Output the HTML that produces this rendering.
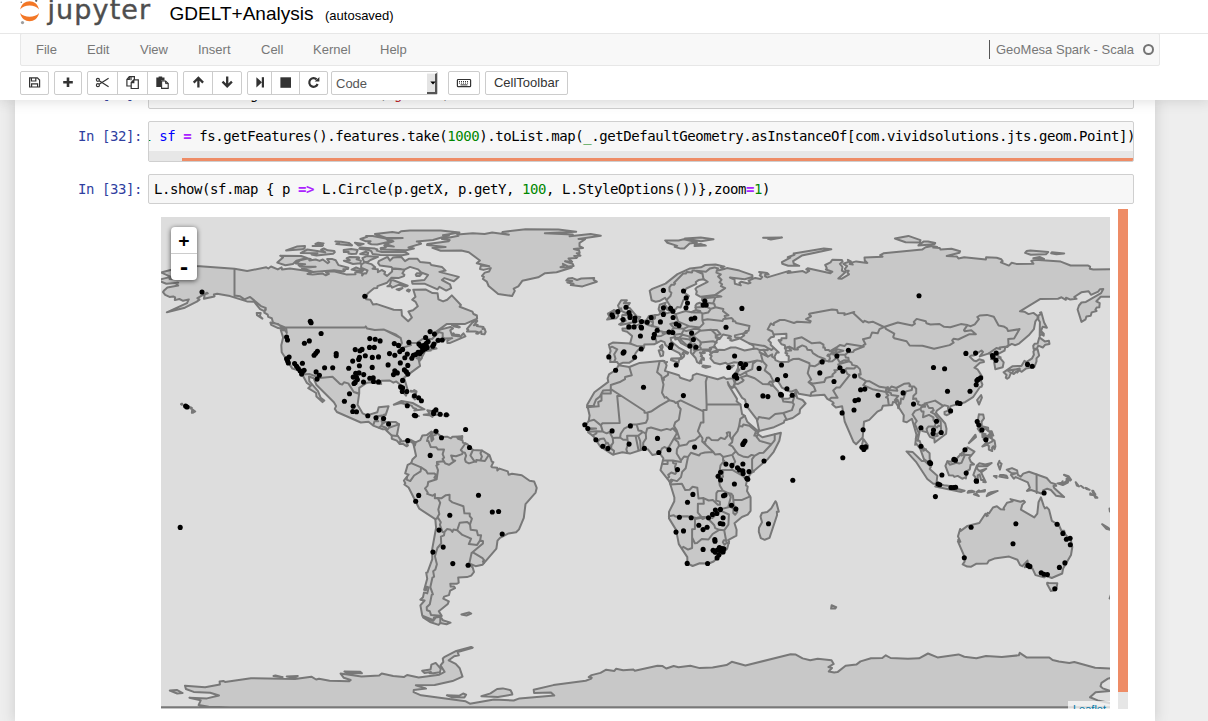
<!DOCTYPE html>
<html lang="en">
<head>
<meta charset="utf-8">
<title>GDELT+Analysis</title>
<style>
*{box-sizing:border-box;margin:0;padding:0}
html,body{width:1208px;height:721px;overflow:hidden;background:#eeeeee;font-family:"Liberation Sans",Arial,sans-serif;font-size:13px;color:#000}
#header{position:absolute;left:0;top:0;width:1208px;height:100px;background:#fff;box-shadow:0 0 12px 1px rgba(87,87,87,0.2);z-index:10}
#logo{position:absolute;left:20px;top:0;overflow:visible}
#icons{position:absolute;left:0;top:0}
#sel{position:absolute;left:331px;top:71px;width:107px;height:24px;background:#fff;border:1px solid #ccc;border-radius:2px;font-size:13px;line-height:23px;padding-left:4px;color:#555}
#selbtn{position:absolute;right:0;top:1px;width:10px;height:21px;background:#e4e4e4;border-right:2px solid #555;border-bottom:2px solid #555;border-top:1px solid #f4f4f4}
.s{color:#ba2121}
#prev{background:#f7f7f7}
#brand{position:absolute;left:47.5px;top:-8px;font-size:27px;line-height:36px;color:#4e4e4e;letter-spacing:1.1px;-webkit-text-stroke:0.4px #4e4e4e;font-family:"DejaVu Sans","Liberation Sans",sans-serif;font-weight:normal}
#nbname{position:absolute;left:169.5px;top:2px;font-size:19.05px;line-height:24px;color:#000;white-space:nowrap}
#autosave{position:absolute;left:325px;top:8px;font-size:13px;line-height:16px;color:#000;white-space:nowrap}
#menubar{position:absolute;left:20px;top:33px;width:1140px;height:33px;background:#f8f8f8;border:1px solid #e7e7e7;border-radius:2px}
#menubar span.m{position:absolute;top:8px;font-size:13px;line-height:15px;color:#777}
#kernel{position:absolute;right:25px;top:8px;font-size:13px;line-height:15px;color:#777;white-space:nowrap}
#kernelsep{position:absolute;left:968px;top:6px;width:1px;height:19px;background:#555}
#kind{position:absolute;left:1121.5px;top:9.5px;width:11.5px;height:11.5px;border:2px solid #747474;border-radius:50%}
#hline{position:absolute;left:0;top:33px;width:1208px;height:1px;background:#e7e7e7}
.btn{position:absolute;top:71px;height:24px;background:#fff;border:1px solid #ccc;border-radius:2px;font-size:12px;line-height:22px;text-align:center;color:#333}
.btn svg{position:absolute;left:0;top:0}
.grp{position:absolute;top:71px;height:24px;background:#fff;border:1px solid #ccc;border-radius:2px}
.grp i{position:absolute;top:0;width:1px;height:22px;background:#ccc}
#notebook{position:absolute;left:15px;top:100px;width:1140px;height:621px;background:#fff;box-shadow:0 0 12px 1px rgba(87,87,87,0.2)}
.prompt{position:absolute;font-family:"DejaVu Sans Mono","Liberation Mono",monospace;font-size:14px;letter-spacing:-0.43px;line-height:17px;color:#303f9f;white-space:pre}
.inp{position:absolute;background:#f7f7f7;border:1px solid #cfcfcf;border-radius:2px;overflow:hidden}
.code{position:absolute;font-family:"DejaVu Sans Mono","Liberation Mono",monospace;font-size:14px;letter-spacing:-0.43px;line-height:17px;color:#000;white-space:pre}
.k{color:#008000}.o{color:#aa22ff;font-weight:bold}.v{color:#0000ff}.n{color:#008800}
#map{position:absolute;left:161px;top:217px;width:949px;height:492px;background:#dddddd;overflow:hidden}
#vbar{position:absolute;left:1118px;top:209px;width:10px;height:500px;background:#e6e6e6}
#vthumb{position:absolute;left:0;top:0;width:10px;height:483px;background:#ee8c66}
#msvg{position:absolute;left:0;top:0}
.ld{fill:#c8c8c8;stroke:#787878;stroke-width:2;stroke-linejoin:round;fill-rule:nonzero}
.bd{fill:none;stroke:#787878;stroke-width:2;stroke-linejoin:round;stroke-linecap:round}
.sea{fill:#dddddd;stroke:#787878;stroke-width:2;stroke-linejoin:round}
.pt circle{fill:#000}
#zoomc{position:absolute;left:10px;top:10px;width:26px;height:53px;background:#fff;border-radius:4px;box-shadow:0 1px 5px rgba(0,0,0,0.65)}
#zoomc div{position:absolute;left:0;width:26px;height:26px;text-align:center;font:bold 18px/26px "DejaVu Sans Mono","Liberation Mono",monospace;color:#000}
#zoomc hr{position:absolute;left:0;top:26px;width:26px;height:1px;border:0;background:#ccc}
#attr{position:absolute;left:907px;top:484px;width:42px;height:16px;background:rgba(255,255,255,0.7);font-size:11px;line-height:16px;color:#0078a8;padding-left:5px}
</style>
</head>
<body>
<div id="notebook"></div>
<div id="prev" class="inp" style="left:148px;top:79px;width:986px;height:30px"></div>
<div class="prompt" style="left:78px;top:86px">In [31]:</div>
<div class="code" style="left:154px;top:86px"><span class="k">val</span> <span class="v">fs</span> <span class="o">=</span> ds.getFeatureSource(<span class="s">"gdelt"</span>)</div>
<div id="header">
  <svg id="logo" width="24" height="26" viewBox="0 0 24 26"><path d="M0.2 9.6 C2 -1.6 17.2 -1.6 19 9.6 C15.2 4.2 4 4.2 0.2 9.6Z" fill="#f37726"/><path d="M0.2 13 C4 18 15.2 18 19 13 C17.2 24 2 24 0.2 13Z" fill="#f37726"/><circle cx="2.5" cy="22.6" r="1.6" fill="#9e9e9e"/><circle cx="16.2" cy="0.8" r="1.1" fill="#616262"/><circle cx="1.3" cy="2.2" r="0.8" fill="#767677"/></svg>
  <div id="brand">jupyter</div>
  <div id="nbname">GDELT+Analysis</div>
  <div id="autosave">(autosaved)</div>
  <div id="hline"></div>
  <div id="menubar">
    <span class="m" style="left:15px">File</span>
    <span class="m" style="left:66px">Edit</span>
    <span class="m" style="left:119px">View</span>
    <span class="m" style="left:177px">Insert</span>
    <span class="m" style="left:240px">Cell</span>
    <span class="m" style="left:292px">Kernel</span>
    <span class="m" style="left:359px">Help</span>
    <div id="kernelsep"></div>
    <div id="kernel">GeoMesa Spark - Scala</div>
    <div id="kind"></div>
  </div>
  <div class="btn" style="left:20px;width:29px"></div>
  <div class="btn" style="left:54px;width:28px"></div>
  <div class="grp" style="left:87px;width:91px"><i style="left:29px"></i><i style="left:59px"></i></div>
  <div class="grp" style="left:183px;width:59px"><i style="left:28px"></i></div>
  <div class="grp" style="left:247px;width:81px"><i style="left:23px"></i><i style="left:51px"></i></div>
  <div id="sel">Code<span id="selbtn"></span></div>
  <div class="btn" style="left:448px;width:32px"></div>
  <div class="btn" style="left:485px;width:83px;color:#333;font-size:13px">CellToolbar</div>
  <svg id="icons" width="600" height="100" viewBox="0 0 600 100">
    <g fill="none" stroke="#333" stroke-width="1.2">
      <path d="M29.6 77.9H37.4L39.6 80.1V87H29.6Z"/><path d="M31.4 78V81H35.8V78M31.6 87V83.8H37.6V87"/>
      <circle cx="97.9" cy="79.8" r="1.5"/><circle cx="97.9" cy="85.2" r="1.5"/><path d="M99.2 80.7L108.6 86.8M99.2 84.3L108.6 78.2"/>
      <path d="M131 80.2V76.7H129.3L126.9 79.4V86H131M129.3 76.7V79.4H126.9M129.3 76.7H134.4V80"/><path d="M131.2 88.5V82.6L133.8 79.9H138.3V88.5ZM133.8 79.9V82.6H131.2"/>
      <rect x="457.4" y="79.5" width="13.2" height="7.2" rx="0.8"/>
    </g>
    <g stroke="#333" stroke-width="1" fill="none"><path d="M459 81.5H469" stroke-dasharray="1 1"/><path d="M459 83.1H469" stroke-dasharray="1 1"/><path d="M460.5 84.9H467.5"/></g>
    <path d="M68 77.4V87M63.2 82.2H72.8" stroke="#333" stroke-width="2.6" fill="none"/>
    <path d="M156.3 77.6H158.6V76.4H162.2V77.6H164.5V80.4H161V87H156.3Z" fill="#333"/><path d="M161.6 88.4V81H165.6L168.2 83.6V88.4Z" fill="#fff" stroke="#333" stroke-width="1.1"/><path d="M165.6 81V83.6H168.2" fill="none" stroke="#333" stroke-width="1"/>
    <g fill="none" stroke="#333" stroke-width="2.3"><path d="M198.4 78V87.6M193.7 82.6L198.4 77.9L203.1 82.6"/><path d="M227.2 86.2V76.6M222.5 81.6L227.2 86.3L231.9 81.6"/></g>
    <path d="M256.4 77.2L262 82.35L256.4 87.5Z" fill="#333"/><rect x="261.8" y="77.2" width="2.2" height="10.3" fill="#333"/>
    <rect x="280.4" y="77.3" width="10.6" height="10.5" fill="#333"/>
    <path d="M316.6 79.4A4.3 4.3 0 1 0 317.6 84" fill="none" stroke="#333" stroke-width="2.2"/><path d="M319.4 76.9V81.6H314.7Z" fill="#333"/>
    <path d="M430.3 81.4H435.7L433 84.4Z" fill="#000"/>
  </svg>
</div>
<div class="prompt" style="left:78px;top:128px">In [32]:</div>
<div class="inp" style="left:148px;top:121px;width:986px;height:41px">
  <div class="code" style="left:-21.8px;top:6px"><span class="k">val</span> <span class="v">sf</span> <span class="o">=</span> fs.getFeatures().features.take(<span class="n">1000</span>).toList.map(<span class="k">_</span>.getDefaultGeometry.asInstanceOf[com.vividsolutions.jts.geom.Point])</div>
  <div style="position:absolute;left:0;top:29px;width:984px;height:10px;background:#e7e7e7"></div>
  <div style="position:absolute;left:33px;top:36px;width:951px;height:3px;background:#ee8c66"></div>
</div>
<div class="prompt" style="left:78px;top:181px">In [33]:</div>
<div class="inp" style="left:148px;top:174px;width:986px;height:30px">
  <div class="code" style="left:5px;top:6px">L.show(sf.map { p <span class="o">=&gt;</span> L.Circle(p.getX, p.getY, <span class="n">100</span>, L.StyleOptions())},zoom<span class="o">=</span><span class="n">1</span>)</div>
</div>
<div id="map"><svg id="msvg" width="949" height="500" viewBox="0 0 949 500">
<path class="ld" d="M33.4 47.6L35.5 48.9L73.5 51.7L73.5 78.5L79 79.3L83.5 82.4L89.1 79.9L99.9 89.1L104.7 90.9L104.8 92.8L103.2 94.1L99.1 92.1L93.1 84.7L85.9 84.4L69 79.1L56.1 76.8L52.9 77.4L53.5 79.4L42.9 81.7L43.8 77.3L46.8 76.4L46.1 75.7L36.4 81.2L38.5 82.6L35.8 84.6L23.9 90.7L5.8 95.3L25.9 86.2L27.8 82.4L22.1 83.8L18.4 82L13.8 83.1L14.1 80.4L12.2 79.4L8.5 79.9L4.2 77.9L2 75.1L3.1 73.4L6.4 70.4L17.2 68.6L15.1 66.8L17.2 65.7L5.3 66.7L-3.7 63.2L6.7 60.6L9 60.6L8.6 62L14.6 61.9L0.2 55.6L10.4 52.7L14 50L29.1 47ZM204.8 109.5L206.2 111.6L213.8 113.1L223.1 112.6L235.2 117.7L239.7 121L240.9 126.1L238.1 130.3L239.3 131.4L250 128.1L249.3 126.4L250.6 125.9L256 125.9L261.5 122L271.1 122L277.6 115L281.7 116.1L281.7 120L284 122.5L275 125.8L273 129.6L275.5 131.6L264.8 133.6L269.8 133.6L264.2 134.1L261.4 139.2L259.7 137.6L261 140.8L258.5 144.1L259.1 142.1L257.3 138.6L257.4 141.7L255.5 141.2L257.5 142.1L259.1 148.9L243.1 160.6L246.8 173.5L245 178.7L239.2 171.8L238.6 167.2L235.3 164.4L232.4 165.7L228.7 163.5L220.8 163.8L219.7 164.2L220.2 167.1L209.3 165.3L205.2 166.1L198.2 170.8L198.2 176.4L197.1 176.5L192.8 175L187.3 166.4L183 165.3L181.2 167.6L178.8 166.7L171.5 159.7L158.7 160.9L148.2 156.9L141.3 157.4L137.4 153.2L131.4 151.6L120.7 135.3L120.3 128.3L122.1 120.5L119.8 113L124.3 113.4L125.8 116L125.1 110.6L203.8 110.6ZM73.5 51.7L86.2 54L105.3 50.3L107.3 51.5L110 49.5L116.8 52.4L120.6 50.4L121 52.6L129 51.5L146.7 54L150.5 55.4L146.5 56.9L151.7 57.5L161.8 56.6L164.8 58.3L167.9 56.9L165 55.7L166.8 54.7L172.6 54.3L185.9 57.6L194.5 57.2L194.2 55.4L196.7 54.9L201.1 55.9L201.1 58.6L202.9 56.3L205.2 56.4L206.5 53.5L200.1 50.6L200.3 47.5L203.7 45.4L210.3 47.1L214.2 50.3L211.6 51.7L216.9 52.3L216.9 55.2L220.7 53L224.1 54.8L223.3 56.9L226 58.9L231.1 54.4L231.2 51.2L239.5 51.9L243.3 53.3L241.4 56.2L243.4 57.7L243 59.1L237.4 61.1L230.5 60.7L226.1 65.7L216.5 69.1L216.3 70.9L213 71.3L206.4 76.8L205.2 82.3L209.3 82.8L212 87.6L215.9 87.1L232.7 92.7L240.5 93.1L240.9 98.4L247.2 104.3L250.9 100.5L247.4 94.5L252 93.2L256.8 89.2L254.6 84.9L251.2 82.7L254.5 79.8L252.3 72.7L264.5 72.4L271.5 76.1L276.6 76.3L277.4 82.3L282.1 84.4L286.2 82.8L290.8 78.4L299.9 88L298.7 89.7L311.4 94.6L312.5 97L315.9 98.5L316.1 101.7L303.7 107.1L285.6 107.1L272.3 116.8L279.2 112.6L289.4 110L292 111.4L289.3 113.3L291.1 118.5L299.5 119.5L302.4 116.3L304.4 119.4L288.6 126.1L286.4 125.9L286.3 123.5L291.2 121.2L283.5 121.6L281.7 120L281.7 116.1L277.6 115L271.1 122L261.5 122L256 125.9L250.6 125.9L249.3 126.4L250 128.1L240 131.4L238 130.6L240.9 126.1L239.7 121L223.1 112.6L213.8 113.1L206.2 111.6L204.8 109.5L203.8 110.6L124.7 110.6L112 105.4L110.8 101.2L107.2 99.9L106.7 97.7L103.3 95.6L104.7 90.9L99.9 89.1L89.1 79.9L83.5 82.4L79 79.3L73.5 78.5ZM316.3 104L312.9 108.3L314.8 107.4L316.7 107.9L315.7 108.9L322.4 109.9L321.5 112L323.5 111.5L324.7 114.8L323.5 117.3L320.4 116.9L320.2 114.2L316.9 116.7L315.2 116.5L317.2 115.2L314.5 114.5L305.9 114.6L307.2 112.8L306 112L311.3 105.7L315.6 103.1ZM123.2 112L117.1 111.1L110.2 107.8L109.4 105.6L116.8 106.9ZM291 108.1L292 107.9L295.7 108.6L298.6 109.8L298.7 110.3L297.3 110.4L293.6 109.5ZM293.4 117.6L298.1 117.9L295.7 119.2L291.3 117.1L292.4 116.2ZM95.7 95.9L99.7 96.1L98.9 99.3L101.4 101.6L96 98.1ZM232.3 63.2L246.7 68.7L244.1 69.6L238.1 67.7L231.2 70.7L230.2 69L226.4 69.3L228.9 67.8L230.2 63ZM198.2 176.4L196.6 187.7L201.7 196.4L205.9 198.4L216.3 195.2L217.7 190.3L227.6 189.3L224.6 198.1L215.7 199.3L215.7 200.9L214.4 200.9L217.2 204.3L213.5 204.3L212.2 208.6L207.5 204.7L199.8 205.5L175.9 195L173.8 191.9L175.1 189.1L172.9 185.2L155.3 167.7L152.7 161.3L148 159.5L148.3 164.2L157 174.2L159.7 180.9L163.3 183.6L161.5 185.1L155.4 179.6L155.1 176L147.2 171.2L149.8 168.7L145.9 165.9L141.3 157.4L148.2 156.9L158.7 160.9L171.5 159.7L178.8 166.7L181.2 167.6L183 165.3L187.3 166.4L192.8 175ZM341.5 15L364.6 12.3L397.4 12.4L415.2 14.7L383.8 16.2L411.7 17.5L408.6 19.2L429.6 17L439.8 18.8L417.5 21.9L424.1 22.1L418.5 26L418.5 29.2L422 31L412.8 32L418.1 33.5L418.7 36L415.7 36.2L419.4 38.7L413.1 38.9L416.4 40L415.4 41L407.5 41.5L411.1 44.7L404 44.3L411.6 46.7L412.6 49L407.5 49.6L401.9 46.8L402.8 48.8L399.5 50.2L410.9 50.5L395.6 55.2L384.1 56.2L377.2 60.3L361.3 63.8L357.3 69.4L352.7 71.7L353.8 73.9L351.1 79L337.2 76.9L327.6 69L325.8 64.6L321.9 62L322.9 59.9L321 58.9L323.8 55.6L328.1 54.5L329.8 51.1L322.4 52.9L319 52L319.9 48.6L328.3 49.3L315.7 46.2L318.9 43.5L307.8 35.2L300.2 33.5L279.7 33.7L271.4 30.9L284.6 29.9L266 28L266.4 26.9L287.6 24.2L288.7 23.1L281 22.1L297.5 18.7L296.3 17.4L311.8 16.2L323.6 17.1L331.2 15.5L347.9 17.7L341.1 16.2ZM433.2 61L432.6 62.8L435.8 64.7L421.4 69.4L409.8 68.1L412.5 66.8L406.3 65.4L411.3 64L405.3 63.4L407.2 61.5L411.6 61.1L416 63L420.3 61.5ZM240.5 184L251.6 186L263.5 192.3L253.3 193.5L255.2 191.9L252.2 191L250.6 188.6L240.8 186.3L241.8 185.6L232.8 187.7ZM270.5 193.9L275.5 194.1L280.2 197.1L279.1 198.2L273.5 197.6L271.4 199.9L268.6 198.2L262.7 197.8L268.8 196.9L266.3 193.3ZM253.9 197.4L257.8 199.1L251.7 198.1ZM286 197.3L287.9 198.1L283.4 198.9L283.6 197.3ZM254 182.4L251.5 180.1L252.1 178.3ZM253.1 174.4L250 174.8L249.8 173.8ZM255.5 174.4L255 176.4L253.2 173.1ZM299.1 219.4L301.3 219.1L301.2 221.2L298.3 221.3ZM212.2 208.6L221.8 212.3L225.6 212.2L225.1 213.3L230.7 218.5L230.8 221.8L235.8 223.6L238.8 227L242.1 226.9L245.7 229.3L246.9 228.5L245.9 226.4L249.4 224.4L252.1 226.3L253 229.5L254.1 227.5L254.5 225.3L249.7 222.8L240.7 224.4L236 217.7L238 207.4L234.5 204.9L221.5 204.8L223.2 203L223.3 197.4L221.8 199.1L215.7 199.3L215.7 200.9L214.4 200.9L217.2 204.3L213.5 204.3ZM217.8 44.2L226.5 39.9L229 43.6L232.1 40.5L240.2 39.9L244 44.2L247.8 41.8L256.5 41.8L259 44.9L269 46.1L270.2 48L280.9 49.9L284.6 53.6L278.4 54.9L297.8 59.9L292.8 64.2L283.4 61.1L280.9 63L289 67.4L290.2 71.1L285.2 73.6L278.4 69.9L276.5 72.4L264 66.8L251.5 66.8L250.9 64.2L263.4 63L267.1 58L260.2 55.5L257.1 52.4L249 49.9L244 52.4L232.1 51.8L230.2 49.9L219 48.6L217.1 46.1ZM279.7 13.6L298.4 15.6L281.9 18.2L288.2 18.2L272 23L255.8 24.4L259.7 24.7L257.8 25.3L260 26.7L247.5 30.4L252.9 31.5L245.2 33.3L219.9 32.4L219.6 31.1L224.8 30.4L223.3 28.4L232.8 29.6L224.3 27L232.4 24.3L227.3 21.7L241.7 21L225.3 21L213.9 17L231.3 14.9L237.8 15.9L240.1 14.3L248.9 13.6ZM247.5 37L241.3 38.3L219.2 38.1L211.7 37.1L210.3 34.2L207.4 33L198.3 31.7L199.3 30.5L213.9 31.6L216.4 32.5L215.7 33.6L220.8 35L243.8 34.7ZM227 23.4L230.4 24.3L216.2 27.5L210.3 27.2L207.3 26L209.5 24.2L204.4 24.2L199.4 22L206.3 19.7L205.1 19L211.7 18.9L224.8 21.5ZM180.1 24.8L187.8 25.9L191 28.4L175.3 27.1L178.1 26.2L174.4 24.4ZM194 25.7L202.7 26.9L197.7 28.6ZM196.6 33.1L195.3 36.7L190.6 37L187.5 36.5L187.6 34.8L182.9 35.1L182.7 32.9L190.1 32ZM204.7 34.8L207.2 35.8L206.7 37.8L199.2 36.9ZM166.7 33.3L173.3 33.9L173.8 35.3L172.1 36.7L155.4 38.4L150.5 37.5L156.5 36.2L139.7 36.1L146.3 32.5L164.3 35.3L160.2 32.6L162.8 31.5ZM144 29.1L143.6 31.3L141.4 32.3L125.1 33.5L135.7 29.6ZM161.1 29L151.6 28.9L162 28.2ZM162.6 26.4L154.4 27L157.3 25.7ZM116.3 45.6L122 40.4L119.2 38.7L140.1 39L145.9 41L135.4 43.7L131.9 47L124.4 48.3ZM166.7 46.2L168.2 45L166.2 42.1L171.5 42.1L174.7 43.3L177.4 48.1L187.3 50.8L187 52.1L182.3 52.3L184.1 53.4L183.1 54.4L173.1 53.2L152.2 55L140.7 51L154.7 49.8L139.1 49.4L137.6 48.3L144.2 47.2L134.9 46.5L139.2 43.2L146.8 41.5L149.7 42L148.3 43.4L154.7 42.5L158.6 43.9L161.8 42.5ZM189 40L197.5 40.2L198.2 41L195.6 42.4L199.9 43.6L199.4 46.2L192 47L182.9 43.7L188.8 43.2L185.7 41.3ZM209.4 43L206.4 45.1L203.1 45L201.4 41.1L205.7 39.1L217 39.9ZM195.1 50.5L202.4 53.4L200.7 54.4L190.6 52.6ZM258.6 59L255.5 59.1L254.8 57.7L256 56.2L260.9 56.5ZM241.5 71.1L238.2 73.2L235.6 72.4ZM247.1 72.5L249 73.2L247.9 74.7L245.9 73.6ZM254.5 225.3L259.3 223.1L261.4 218.5L265.7 218.1L270.4 214.6L272.1 215.6L269.8 217.5L270.6 224.2L272.4 222L271.4 218.8L274.9 217.6L275.6 215.4L280.5 220L286.1 219.7L289.9 221.3L291.5 219.7L298.5 219.5L296.1 220.4L297 221.7L301.5 223.3L301.9 225.6L306.4 227.2L311.9 233L321 233.6L328.5 238.1L330.8 244.6L332.4 245.1L330.3 249.4L331.2 250.2L336.2 250.7L336.3 253.5L338.5 251.6L346.8 254.4L347.7 257.7L351 256.8L360.8 258.2L368.6 263.7L373.2 264.6L375.7 270.9L374.6 275.6L364.5 287.1L362.8 300.8L358 312.4L355.1 315.3L347.5 316.4L339 320.8L336.5 323.6L335.4 331.6L321.4 347.8L314.6 349.2L308.3 346.5L308.1 347.9L311.7 350.4L313 355L310.2 358.6L306 360.1L297.2 360.4L297.7 365.7L296 366.7L289.3 366.8L289.7 369.6L293.1 369.6L294 371.1L289.1 373.7L288 378.1L283.1 379.6L282.3 381.7L287.8 384.4L286.8 386.9L277.8 394.3L280.7 398.9L273 400.5L272.5 403.1L261.3 398.7L259.4 388.4L263.6 383.5L259.3 382.7L262 380.2L263 375.4L266.2 376.4L267.7 370.5L265.7 369.8L264.9 373.4L263.1 372.9L266.2 361.7L265.2 355.7L266.4 355.6L271.3 342.2L271.2 332.1L275.1 310.8L274.3 302.2L258.3 291.7L247.6 270.5L243.4 267.5L244.3 266.2L242.9 263.5L247.6 257.6L244.2 256.4L246.7 247.8L250.2 246.1L251.4 242.5L255.1 239L253 229.5ZM279.3 399.7L281.8 403.2L289.5 405.6L285.5 407.2L279.3 406.1L277.6 407.9L269 405L262.1 400.3L272.2 403.8L274.6 400.6ZM300.4 397.5L308 395.4L310.2 396.6L305.5 398.5ZM457.6 148.3L468.3 150L478.7 145.9L501.6 143.8L503.5 144.1L503.5 145.6L506.1 145L504.7 146.4L505.6 148.5L503.9 153.9L517.9 158.2L519.2 160.7L528.8 163.9L531.5 161.9L531.8 158.3L535.8 156.6L556.7 162.2L562.6 160.2L565.4 162L572 161.2L573.8 166.1L571.6 170.9L568.8 169.2L566.7 165.1L567.6 168.3L576 181.9L575.6 184.3L579.4 187.4L581.1 197.1L583.8 198.8L586.2 204.7L597.7 214.8L596 216.6L601.4 220.3L619.9 215.8L618.3 223.8L612.7 234.8L606.9 241.9L589 257.3L586 263.3L584.9 268.4L586.7 269.5L586 274.1L589.6 280.6L589.6 293.8L586.7 297.6L580.9 300L573.5 306.3L575.6 312.8L575.4 318.6L567.1 323.2L568.1 324.6L566.1 331.8L552.6 344.5L547.8 346.5L538.7 346.3L531.6 349L526.4 346.3L526.3 340.1L517.8 327.1L515.1 312.9L508 301.4L508 294.9L513.3 284.2L513.4 280.5L508.4 264.3L499.5 253.2L502.4 241.3L498.7 236.4L491.3 237.9L486.8 232.2L482.2 232.2L468.9 236.6L461.3 235.3L451.8 237.6L439.1 229.3L432.3 219.1L427.3 215.4L427 211.3L424.4 208.1L427.7 204.1L428.6 198.5L426.2 187.7L433.4 175.3L447.3 164.9L446.6 161.3L448 157.4L454.8 153ZM615.4 285.5L617.8 294.7L615.8 294.7L616.1 298L608.5 320.9L603.7 322.8L599.8 321.1L597.8 314.8L598 310.7L601 305.3L599.5 299.5L600.9 296.1L606.2 294.9L610.2 291.5L614.4 284.2ZM572 161.2L573.9 166.5L573 170.2L574.4 170.2L581.1 180.9L584 182.6L585.8 189.4L595.8 202.3L598.2 214L613 210.2L622.9 205.6L623.5 203.4L631.7 201L638.6 196.1L639 192.4L644.6 186.5L641.6 183L636.2 181.1L634.8 174.9L628.1 181.4L621.8 181.7L621.2 176.6L619.6 176L619 179.6L617.1 174.1L612.2 168.8L610.9 164.7L613.7 163.8L617.1 164.2L621 170.7L626.6 173.7L630.1 174.7L635.2 172.8L637.8 176.8L649.4 178.7L663.3 177.7L666.3 181.9L671.8 185L672.6 186.1L671.2 187.2L674.9 190.6L681.1 189.2L683.7 204.5L692.4 224.7L695.1 227.3L701.7 220.5L703 204.8L708.3 202.9L716.4 194.6L720.5 192.7L721.9 188.8L731.3 187.9L731.9 185.1L734.5 185.2L742.8 198.2L742.4 204.4L745.8 205.3L750.9 201.8L755.4 217.5L754.2 227.8L754.7 226.2L759.2 231.6L762.9 242.1L769 246.5L771 246.3L768.7 242.1L768.6 236.2L760.3 228.9L758.6 223.8L756.7 223.7L759.2 211.9L761.7 211.9L761.3 214.1L766.3 215.3L768.9 219.8L773.4 221.8L773.6 225.5L785.1 216.8L785.5 211.8L784.2 206.5L775 195.8L775.7 193.8L783.2 188.2L787 189.1L787.1 192.3L788.6 192.1L789.6 189.1L804.1 185.2L812 180.2L819 170L820.6 169.7L821.4 167.5L819.4 162.7L821.2 162L821.3 159.9L816.5 152.3L813.4 150.7L819 145.8L823 145L822.5 143.5L818.2 142.3L815 144.3L812.7 143.5L808.8 139.8L810.3 138.5L813 138.4L820.5 133.5L822 135L818.8 139.4L828 136.4L831 137.5L830 142.1L833.6 142.4L835.3 145.1L833.2 145.5L834.3 152.2L841.7 150.2L842.7 145.4L836.9 138.5L837.3 136.9L843.5 133.7L844.2 130.7L850.8 126.9L854.3 128.2L858.1 126.6L867.7 118.3L872.9 112.2L874.4 104.3L876.6 101.4L876.6 99L872.4 95.9L867.5 97.1L863.3 94.7L858.9 94.3L879 82.1L897 81.7L900.5 80.3L904.8 82.8L905 80.8L909.2 82.5L915.5 81.8L913.2 80L920.3 75.3L927.6 74.3L930 77.8L937.2 74.7L938.9 72.3L942.3 72.1L940.1 76.1L924.9 84.9L920.5 85.5L918 88.5L916.6 92.5L920.5 104.9L924.6 102.3L925.4 99.4L929.7 98.7L930.7 95.4L935.6 94L934.4 92.7L935.7 90.4L938.3 90.3L938.7 86.1L935.4 84.3L939.7 79.7L959 79.7L968.5 74.6L979 72.2L984.3 72.8L984.7 70.9L979.1 66.2L986.5 65.2L986.5 53.8L974.3 51.2L959.3 50.6L958.1 51.9L960.4 53.7L956.9 54.6L951.9 52.1L932.3 52.5L928.8 51.7L929.1 49.6L926.7 48.4L909.6 48.5L899.7 44.6L874.1 42.8L870.3 44L872.4 46.7L855.3 46.9L850.7 45.7L847.9 48.6L839.9 45.3L841.6 44.1L840.3 42.2L835.7 40.7L825.1 40.3L824.9 42.4L803.2 40.2L797.4 41.4L796 39.6L785.7 39L798.5 35.7L799.1 34.2L790.5 31.8L779.5 32.5L778.8 31.1L772.3 30.6L776.2 29.9L771.3 29L764.6 30.2L761.1 32.6L722.5 36.3L719.2 38.2L721.5 39.7L703.5 40.5L703.8 43.6L706.3 45.9L695.2 44.4L690.4 45.6L691.7 47.6L688.7 47.1L689.8 44.3L686.9 42.8L687.5 44.9L682.4 46.8L686.1 49.1L683.9 51.9L684.5 53.5L687.7 53.8L686.3 55.6L688 57.3L680.5 61.8L677.3 61.4L684.1 55.4L680.9 53.7L681.5 49.8L678.9 46.9L681.6 44.6L681 43L671.3 42.8L669.5 45.4L664.2 48L665.8 51.1L664.9 52.5L671.3 54.8L669.4 56.3L646.7 51.3L645.3 52.3L648.2 53.9L645 55.8L641.8 54.1L626.6 56L629.4 54.3L627.3 54.1L606.3 60.4L604.1 59.4L604.1 57.8L607.7 57.5L606.1 55.9L598.1 55L600.2 56.7L598.8 58.4L601.2 60.1L599.5 62.1L594.2 60.9L587.6 63.7L589.5 65.8L587.1 66.5L580.3 64.7L578.4 65.8L579.8 68.4L573.9 66.8L573.5 62.6L568.9 60.5L583.7 62.3L591.5 60L591.3 58.1L578.4 53.6L565.9 51.1L563 52.1L559.9 50.3L563.5 49.6L554.6 47.5L544.3 48L540 50.3L529.1 51.4L516.5 57.1L504.5 66.6L491.3 71.9L488.7 73.7L490.6 83.3L494.6 84.8L498.3 84.1L504 80.8L511.3 92.5L514.6 92.4L516.2 90.1L519.7 90.4L522.4 83L525.3 82.3L527.9 79.1L523.2 75.5L525.3 71.5L535.3 66.8L534.8 65L537.6 63.1L542.5 62.2L546.7 64.8L535.8 70.3L534.4 71.9L535.8 74.5L535.1 77.3L539.6 79.8L554.3 77.9L560.4 79.6L541.1 81.6L540.9 83.3L544 83.9L543.1 87.8L538.6 85.7L535.9 86.7L534.5 88.5L535 93L530.4 95.2L524.6 94L514.7 97.1L510.1 95.1L505.6 96.4L502.8 94.7L501.9 92.2L505.5 89.4L503.7 88.2L504.6 85.8L498.8 87.6L497.6 92.1L499.5 96.3L497.6 97.7L487.9 99L485.4 103.2L479.2 105.1L478.3 107.4L471.7 109.6L469 108.4L469.9 111.6L461.4 111.5L461.7 113.6L466.1 114.7L471.1 119.1L469.1 126.5L451.8 125.6L447.8 127.6L449.6 134.1L447.4 139.8L449.4 141.1L449.2 145.1L456 144.9L457.8 147.5L462.1 145.7L468.4 145.7L472.6 142.9L474.8 139.8L473.7 138.2L474.8 135.9L476.8 133.3L483.1 130.8L483.3 127.5L493.1 127.3L499.8 123.8L503.5 125.1L504.4 127.9L508.9 131.4L518.3 136.1L520.3 139.2L519.1 142.2L520.3 141.9L523 139.4L523.3 137.9L521.3 136.8L522.5 135L526.5 136.8L527.1 135.7L517.6 130.6L510.3 124.6L509.7 120.9L514.2 120.3L514.2 122.6L516.9 121.8L520.1 126.2L530.1 131.3L529.7 135.5L534.6 141L536.1 145.2L538.5 146.4L539.3 143.9L540.3 146.4L540.3 142.1L542.9 142.9L542.9 141.3L539.8 139.2L540.9 138.5L538.9 135.5L542.5 136.3L543.9 135.9L541.9 134.3L545.4 133.5L548.6 133.9L549.5 135.8L556.5 133.2L553.2 128.9L556.5 122.3L558.7 121.9L562 117.5L569.2 118.9L570 119.6L566.8 121.1L569.9 121.9L569.3 123.3L570.9 123.8L577.8 121.7L578.4 120.7L574.1 120.2L573.9 118.4L585.9 115.6L581.7 117.3L583.2 118.5L578.8 121.3L592.4 128.7L592.7 131.8L583.6 133.5L574.5 130.4L569.8 130.5L563.1 133.1L557.7 132.8L556.5 134.9L552.1 135L548.9 137.8L550.7 139.1L549.4 141.3L553.1 145.7L559 147.2L564.7 145.8L567 147.3L573.2 145.3L577.4 145.8L576.9 151.5ZM509.7 90.4L510.6 91.8L508.9 94.1L505.9 92.5L505.5 91.3ZM465.9 83.2L462.9 86.3L468.9 85.9L465.6 90.8L468.6 91L475.8 99.4L479.3 100L477.5 102.6L478.6 104.1L459.6 107.9L458.1 107.3L464.8 103.7L459.5 102.1L462.5 101.2L460.9 99.7L461.5 97.8L465.7 98.1L466.1 96.5L460.7 94.2L460.1 91.3L458.6 92.7L457 88.5L460.2 83.2ZM456.9 96.8L457.3 98.8L455.2 101.3L446.1 102.6L448.4 99.6L446.9 96.7L453 93.2L458.4 94.8ZM518.6 141.3L517.5 145.8L509.9 143L510.3 141.5ZM500.7 132.8L502.4 134.8L502 138.6L499.6 139.3L497.7 133.5ZM501.7 130.1L500.8 132.3L498.8 129.8L501.2 127.7ZM541.9 148.4L549.3 149.6L544.8 150.7L541.4 149.6ZM567.6 150L572.9 148.5L568.3 151.7L566.3 150.2ZM517.6 23.4L522.8 22.3L535.8 25.4L528.6 26.5L523.2 31.5L519.8 31.6L513.6 29.9L516.2 28.9L506.4 25.7L504.2 23.4ZM552.5 22.3L540 24.2L523.9 21.5L539.7 20.6ZM544.8 28.6L533.5 29L535.4 28.3L533.7 27.4L539.6 26.9ZM620.9 45.2L629.3 40.6L626.7 40.2L633.5 37.7L632.7 36.4L662.8 31.5L670.3 32.3L640.8 38.6L632.1 44.1L632.7 46.5L638.2 48.8L627.2 48.7L621.3 46.7ZM758.8 25.6L744.6 25.2L733.9 21.5L747.4 18.9L759.5 23.1ZM767 24.5L774.2 26.1L773.4 27.3L757.4 28.4L762.5 24.6ZM869.4 33.4L887.2 35.1L885 37.2L869.8 37.8L864.1 35.9L865.6 34ZM890.8 35.2L903.2 36.4L895.4 37.3L890.1 36.2ZM878.6 39.9L883 41.8L872.3 41.3ZM602.1 20.8L621 20.5L609.9 22.4L606.8 21.7L608.4 20.9ZM883.1 105.6L885.9 110.7L881.7 109.7L880 113.9L882.8 116.8L882.7 118.8L880.5 117.1L878.7 119.2L878.9 105.1L877.2 102.3L877.5 98.4L880.1 97.1L879 95.7L880.3 95.3ZM883.8 124.4L887.9 123.8L888.5 126.9L884.3 127.7L881.8 130.5L877.3 128.6L875.8 131.7L872.6 131.8L872.2 128.9L873.6 126.8L876.6 126.6L878.3 120.4ZM875.5 144.4L873.4 150L864.8 151.6L860.7 154.8L858.8 153.7L858.7 151.6L847.1 153.6L850 155.7L848.1 160.5L846.2 161.7L844.8 160.6L845.6 158.1L842.6 155.3L851.7 149.2L860.4 148.9L863.4 143.9L865.3 145.2L871.1 141.3L872.9 137.8L872.4 134.6L873.6 132.8L876.6 132.3L878.1 138.6L875.5 141.4ZM855.4 152.3L857.8 153.8L856.2 155.6L855.1 154.7L852.8 157L851 156.2L852.6 153.1ZM820.9 180.6L818 187.5L816.1 183L820.1 178ZM788.4 196.9L785.9 198.2L783.6 197.3L783.5 194.9L789.6 192.9ZM707.1 228.6L706.7 231.6L703.1 233L701.2 226.7L702.5 222.1ZM819.6 197.4L822.2 197.4L823 201.4L820.6 204.7L820.8 209.2L827.1 210.8L827.4 214.3L824.2 211.5L823.4 212.5L821.6 210.8L817.6 210.6L818.6 208.7L816 207.4L815.5 203.5L816.7 204.4L817.9 197.3ZM834 226.1L834.4 229.5L833.5 232.2L832.4 229.3L831.1 230.7L831.2 234.1L827.8 232.5L827.9 229.1L826.1 227.7L821.3 229.5L825.8 225.3L826.8 226.6L831.4 224.4L831.2 222.2L833.5 223.6ZM814.4 217.7L815 220L807.8 226.2ZM828 214.3L830.7 214.3L832.3 218.6L830.1 217.8L830.9 220.5L829.5 221.2L828.1 217.3L829.7 216.5ZM821.2 216.2L824.7 217.1L821.5 220.3ZM827.2 220.8L824.4 224.3L822.6 222.4L824.2 219.1L825.8 218.9L825.3 220.8L827.4 218.1ZM816.7 211.7L820.2 212.8L819.4 215.3ZM786.4 244.3L790.7 244.7L791.3 242.3L795.9 241.2L806.5 230.3L813.5 234.6L808.2 240.8L809.8 244.8L813 247.4L809.6 247.8L808.8 252.3L806 254.2L804.9 261.4L804.5 260.4L801.2 261.7L796.7 258.9L793.3 259.9L792.2 258.5L788 258.3L784.4 248.8ZM775.5 266.6L772.3 266.7L766.3 262L755 244.8L745.5 234.4L751.8 235.1L760.8 244L763.7 244.1L769.9 249.7L768.7 252L776.3 258.7ZM783.1 268.3L794.8 269.8L795.9 271.6L803.6 273.8L800.4 274.9L774.2 269.5L776.2 266.8ZM830.7 246L826.3 249.3L816.3 249.3L815.9 251.5L818.5 254L825.3 251.8L820.1 255.4L824.8 265.2L822.2 265L823.6 262.7L820.1 263L818.6 257.5L816.7 258.3L817.1 265.7L814 265.3L814.4 259.9L812.3 258L815.9 248.4L818.4 246.3L824.2 247.5ZM830 275.3L836.7 273.9L825.7 279.1L827.2 276.4ZM817.9 279.1L812.9 277.2L815.5 276.6ZM819.6 274.3L824.1 273L823.7 274.6L815.6 275.1L817.9 273.4ZM810.9 273.8L813.4 274.8L806.6 275.7L807.5 274.1ZM838.6 245.4L840.6 246.8L838.9 252.6L836.9 247.1L838.4 243.8ZM842.5 258L845.6 258.8L846.6 261L838.3 259.6L839 258.1ZM835.7 258.9L835.4 260.8L832.9 259ZM856.1 253.3L856.9 257.9L859.8 259.6L862.2 256.6L868 254.8L885.7 261L889.7 265.6L894.5 267.3L895.2 268.8L892.5 269.1L893.2 271L903.1 280.1L895.2 278.8L889.9 273L886.2 271.7L882.1 273.5L882.4 275.5L880.2 276.5L870.2 273L865.9 273.9L868.9 270.8L866.8 265.3L854.7 260.1L852.8 261.7L849.9 258L854.8 256.3L850.6 256.3L845.8 252.7L851 251.1ZM910.1 262.8L909.2 263.6L908 260.8L903 257.8L907.5 259.2ZM907.8 262.3L906.8 265.6L901.8 268L896.4 266.4L900.7 265.7L901.6 264.2L901.8 265.7L903.5 265.5L905.9 263.5L905.5 261.9ZM914.7 265.2L917.9 269.4L915.9 268.6ZM929.3 276.3L932 278.1L929.2 277.8ZM931.3 273.7L932.2 273.7L933.3 275.9L934.4 277.3L934 277.8L931.9 275.4ZM928.6 272.8L925.6 272L924.5 271.1L924.9 270.8L926.3 271.5ZM921.5 270L922.6 270.9L919.8 268.8ZM933.4 279L935.1 279.7L935.6 279.8L936.4 280.8L934.4 280.8ZM946.1 310L949.9 313L945.2 311.7L941.1 307.2ZM882.8 289.1L883.9 291.4L885.7 290.3L888 292.6L890.9 303.9L897.9 308L900.3 313.5L903.2 313.7L903.7 316.7L910.1 324.2L911.3 330L910 338L902.1 351.5L901.2 356.5L890.7 361L886.6 359.3L887 357.8L883 360.4L874.5 358.1L871.5 351.6L867.4 351.3L867.6 347.8L863.7 350.3L866.7 345.7L866.5 343.6L861.3 349.2L859.1 348.1L856.4 342.8L848.1 339.6L833.3 341.6L827.8 343.8L826.2 346.4L815.5 346.7L810.2 349.7L806.2 349.6L801.7 347.3L803.6 344.6L803.6 339.9L796.9 324.3L798.1 325.5L797.2 322.9L799.4 324.8L797 319.3L799.2 311.9L799.4 314.1L806.5 308.9L818.3 306L824.4 296.7L825.6 299.1L826.8 298.6L825.8 297.2L826.7 295.8L828 296.4L832 290.5L835.9 289.3L839.6 292.3L843.2 292.6L842.6 291L846 285.7L851.6 284.4L849.5 282.1L859.4 284.8L862.7 283.7L864 285.1L861.2 287.9L859.9 292.7L873.3 300.4L876.3 296.6L877.5 285.3L879.9 280.4ZM888.1 366L896.3 366.3L895.2 372.9L889.9 373.9L886.1 367.1L886.2 365.8ZM-37.5 490.2L-8.9 488.6L-0.6 490.2L68.1 490.2L47.7 489.8L37.6 488.1L39.7 483.4L28.4 480.7L46 481.4L58 478.5L49.2 475.7L32.7 474.9L24.9 472L24 468.7L44.1 470.2L58.9 467.5L58.6 464.4L62.3 463.9L64 464.9L89.9 461.3L134 461.9L150.4 459.7L155.1 462.5L158 461.7L168.6 463.8L188.2 464.2L189.7 463L182.8 460.8L179.6 456.6L200.5 459.4L218.2 458.6L220.7 456.4L232.2 459L242.8 460.1L246.1 458L257.7 460.4L278.4 457.7L283.6 454.9L279.5 448.3L282.3 445L281.8 441.5L283.2 440.2L295.3 433.9L310.1 430L311.7 430.7L296.7 435.1L297.8 438.3L293.2 439.2L287.7 443.3L294.7 446.9L298.7 451.2L301.5 459.6L291.5 464.1L273.7 468L254.8 468.2L265 471.6L252.8 472.9L252.6 475.2L260.1 478.3L304.7 484.3L308.9 486.7L333 482.5L352.7 483.5L358.5 481.4L393.3 478.5L390 475.5L373.1 476L372.7 472.8L392.4 468.1L424.7 463.7L429.8 461.9L430.7 460.8L427.7 460.1L430.6 458.1L439.5 455.9L445.2 452.7L453.4 453.9L455 451.8L462.2 453.3L472.6 452.6L473.8 453.8L496.5 448.8L501.6 449.1L505.3 451.5L512.7 449L517.5 450.2L529.3 448.8L538.7 451.1L551.6 450.4L565.5 448.1L570.8 444.8L584.4 448.5L629.6 437.2L634.8 437.6L641.6 441.4L649.2 443.3L656.7 441.7L670.5 443.2L672.7 446.9L667.4 450L671 451L667.8 454.4L673.2 455.5L676.5 455.1L684.6 448.7L695.3 447.6L699.5 444.4L710 441.2L721.3 441L724.8 438.3L729.6 441L746.9 441.7L758.1 441.3L767 436.5L776.5 440.4L797.6 437.4L803.3 439.7L815.3 441.3L825 439.1L840.9 439.9L857.8 438.3L858.7 435.8L865.5 440.4L888.3 440.4L891.6 443.1L897.9 444.5L908.3 445.9L913.3 445L934.1 450.8L950.4 451.5L961.5 453.9L956 459.5L946.9 461.6L940.5 465.8L939.5 469.2L941.8 471.4L949.5 474L934.6 475.2L929 480.3L936.7 483.4L967.2 490.1L1043.4 490.2L-94.4 490.2ZM305.1 477.7L303.4 480.4L291.1 480.2L285.9 478.3L298.5 478.7L302.1 476.5ZM183.4 454.5L199.2 454.7L200.9 456.3L187.8 456.2ZM279.8 451.8L278.9 455.3L272.3 456.2L268.6 456.2L270 455.1L263.5 455.9L261.1 453.8L269.5 452.5L270.4 447.7L274.7 445.9ZM351.1 476.2L351.3 477.6L336.9 479.9L320.4 479.3L329.5 476.4L336.1 472L341.8 471.4L349.6 473.2ZM8.8 473.6L15.8 472.9L21.6 476.1L16.2 476.5ZM114.5 458.4L121.7 460.1L112.5 459ZM125.7 459.5L136.8 459L132.5 460.7ZM32.1 195.7L30.9 195.8L31.2 192.3L34.2 194.5ZM30.5 191.3L29.6 191.5L29.1 190.9L28.8 190.7L28.7 190.5L29 190.2L30 190.5L30.8 190.9ZM28.6 189.8L28.5 190.1L27 190L27.2 189.6ZM26.1 189.4L25.9 189.5L25.7 189.5L24.7 189.4L24.4 188.7L24.3 188.6L25 188.2L25.2 188.4ZM21.2 187.5L20.9 187.8L20 187.2L20.1 187L20.5 186.7L21.2 186.8ZM670.6 388.3L675.2 390.1L674.4 391.4L670.1 391.6ZM966.6 366.4L967.3 367.6L969.3 366.4L970.1 368.8L965.8 373.4L966.8 374.7L962.2 375.8L959.8 380.6L956.1 382.7L948.6 381.5L949.7 378.3L959.5 372.4L964 366.5L966 365.2ZM949.8 292.5L950.3 294.8L948.9 294.6L948.5 291.6Z"/>
<path class="sea" d="M609.9 125.8L609.6 127.7L617.8 135.5L615.5 135.7L613.5 139.6L614.4 143.1L619.1 145.1L627.6 144.8L627.8 139.2L625.5 138.2L626.3 136.3L624.4 136.1L625 133.7L630.2 133.5L627.3 130.2L625 130.9L624.7 133L623.8 128.3L620.5 127.3L617.6 123.1L620.4 123.4L620.5 121.3L625.4 121.3L625.4 116.7L612.7 117.6L613 119.7L610.1 120.2L607.3 123.1Z"/>
<path class="bd" d="M270.5 193.9L270.5 198.7M220.9 198.9L220.9 201.6L220.7 204.8L221.5 204.8M223.6 205.3L220.9 207.1L220.7 207.7L220.3 209M220.3 209L219.7 209.2L218.3 210.5L218.2 210.9M220.3 209L225 210.8L224.8 211.9M226.1 213.1L227.8 210.8L238 207.4M230.7 218.5L236.5 218.9M238.5 226.6L239.7 222.8M279.3 399.7L279.3 406.1M271.6 216.5L267.1 220.3L266 224L267.5 224.1L269.8 230.1L275.1 230.2L277.1 232.6L283 232.6L281.6 237.2L283.1 240.6L281.6 242L284.3 246.4M284.3 246.4L282.4 244.2L275.9 245.1L276 246.9L277.6 247.2L275.3 248.5L277 253.2L275.7 262.2M275.7 262.2L273.4 260.6L275.2 257.8L273.1 256.4L266.7 256.6L265 253.6L260.1 250.4M260.1 250.4L250.2 246.1M260.1 250.4L259.6 254.4L253.1 258.5L249.2 264.1L245.7 262.6L246.1 259.7M275.7 262.2L267.2 265L266.5 268.9L264 271.4L266.8 275.7L266.2 276.9L271.7 278.7L274 277L273.8 281.3L276.7 281.1M276.7 281.1L279.2 285.7L277.3 292.5L278.3 296.9L276.6 300M276.6 300L275.8 301.5L274.3 302.2M276.6 300L279.8 305.2L278.9 307.9L281.6 315.1L283.6 314.7M276.7 281.1L280.3 281.3L284.9 278.2L288.6 277.8L288.5 282.9L291.5 285.4L302.4 289.2L303.4 296.3L308.8 296.4L308.7 299.1L310.9 301.7L309 307.4M309 307.4L306.3 305.1L298.7 305.8L296.2 313.3M296.2 313.3L292.5 312.5L291.4 314.9L289.7 312.8L286 312.1L283.6 314.7M283.6 314.7L283 318.4L279.9 319.7L280.2 326.5L276.4 331L273.9 339.2L275.9 347.3L274.4 352.4L272.2 354.3L273.1 359.7L271.4 360.7L269.3 370.2L271.9 377.4L270.7 377.9L268.8 387.2L265.7 390.3L265.9 393.3L268.8 394.2L270 397.9L279.5 398.8M296.2 313.3L301.4 317.9L310.1 321.6L307.8 327.1L316.1 327.9L319.1 323.2M309 307.4L309.7 312.8L315.8 313.6L316.9 318.2L320.1 318.3L319.1 323.2M319.1 323.2L322 324.3L321.9 326.6L310.6 336M310.6 336L308.3 346.5M310.6 336L312.4 335.6L321.5 341.2L323.1 343.1L321.9 344.4L322.7 346.1M304.5 226.2L299.8 233L301.8 235.2M301.8 235.2L301.1 237.1L295 239.3L290.1 238.5L291.7 242.9L294.2 243.7L288 247.8L284.3 246.4M301.8 235.2L303.9 235.7L305.1 238.7L303.9 242.1L304.8 244.9L308 246.4L313.7 244.6M311.9 233L309.4 238.5L313.7 244.6M313.7 244.6L315.2 244.8L315.3 242.9L319.4 243.4M321 233.6L319.5 236.1L320.9 239.7L319.4 243.4M319.4 243.4L323.9 244L327.6 238.2M253 229.5L254.1 227.5L254.5 225.3M449.8 171.3L449.8 176.4L440.5 176.2L440.5 183.5L437.2 185.2L437.7 189.3L426 190.3M449.8 171.3L449.5 172.9L442.1 173.5L438.9 179.5L435 182.6L432.5 188.8L426.1 189.1M468.3 150L470.8 158.2L464.1 160L464 162.1L459.6 164.7L449.8 168L449.8 171.3M449.8 172.1L460.5 179M460.5 179L456.2 179L458.7 205.9L441.3 206.2L439.9 208.4M439.9 208.4L433 202.8L427.7 204.1M460.5 179L483.5 194L483.5 195.8L486.6 195.5M486.6 195.5L490.7 194.2L498.9 188.6L508.6 183.2M508.6 183.2L505.1 180.1L503.8 180.7L501 175.8L502.5 167.6L501.5 163.8M501.5 163.8L500.3 158.7L496.1 155.2L498.5 144.9M501.5 163.8L502.9 163.1L502.8 160.7L507 157.9L507.2 155.7M508.6 183.2L513.1 184.5L514.7 186L516.7 185M516.7 185L517.5 189.4L519.7 192L517.9 202.7L514.2 205.4L513 209.1L515.7 213.4M516.7 185L519.6 183.4L531 188.8L542.3 194.3M542.3 194.3L542.3 193.1L545.6 193.1L545.6 187.4M545.6 187.4L544.8 164.6L546.1 160.2M545.6 187.4L557 187.4L568.1 187.4L579.4 187.4M542.3 194.3L542.5 205.6L540 205.4L536.9 214.2L539.5 218.3M539.5 218.3L534.2 223L528 224.5L525.6 227.6L518 228.9M518 228.9L517.1 225L514.2 222.8L514.8 221.5L518.5 221.6L515.7 213.4M498.7 236.4L500.8 231.7L503.3 230L506 231.1L507.9 230.1L515.5 217.1L515.7 213.4M484.8 216.8L486.2 211.5L490 210.5L500.1 213.5L505.8 211.9L509.5 212.9L511.7 211.3L514.8 214.5M486.6 195.5L486.6 202.1L484.9 205.7L475.6 207.5M475.6 207.5L477.4 213.4L480.7 214.1L480.6 216M480.6 216L481.6 215.2L482.6 215.2L484.8 216.8M484.8 216.8L485.1 221.4L482.2 225.8L482.2 232.2M479.8 232.5L479.2 224L477.1 218.7M477.1 218.7L480.6 216M477.5 233.1L474.6 218.7M474.6 218.7L477.1 218.7M474.6 218.7L466.1 218.8L466.5 222.6M466.4 235.8L465.3 232.2L467.2 226.6L466.5 222.6M466.5 222.6L462.2 222.7L459.1 220.5M459.1 220.5L451.7 221M451.7 221L452.2 225.6L450.5 228.1M450.5 228.1L450 231.6L453 233.8L452.6 237.6M450.5 228.1L448.3 229.2L446.7 225.7L445.4 226.1M445.4 226.1L442 230.7M445.4 226.1L442.9 221.4L439.1 222L436.8 224.7M451.7 221L448.5 215L445.6 216.3L441.8 214.6M441.8 214.6L435.5 214.2M435.5 214.2L435.4 216.4L431.5 218.6M435.5 214.2L427.1 214.8M441.8 214.6L439.9 208.4M426.6 212.6L435.1 211.6L427 211.3M459.1 220.5L459.7 216.7L463.1 211.7L471.5 207.4L475.6 207.5M518 228.9L515.9 232.3L515.7 236.5L520 243.5M520 243.5L519.8 245.1L511.7 243.5M511.7 243.5L506.6 243.6M506.6 243.6L501.9 243.5M506.6 243.6L506.6 247L502.5 247L501.5 247.1M511.7 243.5L512.3 246.3L515.1 246.6L513.9 249.9L515.2 255.7L514.3 257L510.3 255.5L507.2 257.9L508.2 259.8L506 261.3M520 243.5L523.2 239.4L527 240M527 240L524.7 251.2L521.2 254.9L520 260.1L516 264.1L510.4 262.6L508.4 264.3M511.4 263.6L509.1 266.5M527 240L529.9 235.7L538.2 238.5L539.5 236.6L543.9 235.5L552.4 235.1M539.5 218.3L541.5 221.3L541.2 224.5L552.4 235.1M552.4 235.1L554.1 237.5L559 236.9L562.2 240M562.2 240L562 243.3L563.2 243.7L559.5 248.3L558.6 253.8M558.6 253.8L557 258.1M557 258.1L557.8 259.4L558 262.8M558 262.8L558.8 268.5L561.9 273.7M561.9 273.7L557 273.9L555.4 276.1L555.2 283.5L558.8 284.6L559 287.7L556.8 287.7L551.8 283L547.7 283.5L542.5 281.1M542.5 281.1L537.5 281.5L536.3 270.7L531.6 269.7L528.6 272.7L524.2 273L520.9 266.7L509.5 267.4M542.5 281.1L542.8 286.7L536.9 286.7L536.8 295.7L540.5 299.8M507.9 299.2L512.8 298.3L514.5 299.6L526.4 299.2L535.3 301L540.5 299.8M540.5 299.8L545.8 300.2M545.8 300.2L541.6 302L540.5 300.8L534 301.9L533.9 312L531.1 312.2L531.1 320.5M531.1 320.5L531.1 331L527 332.6L522.3 329.9L521 331.3M531.1 320.5L533.9 326.3L536 326L540.8 321.9L547.5 322.5L551.6 317L558.2 312.8M558.2 312.8L554.2 311.1L553.3 308.3L545.8 300.2M546.4 300.5L551.4 301L556.8 295.6L560.6 294.1M560.6 294.1L560.3 292.1L569 289.7M569 289.7L567.5 289L569.8 280L567.7 276.3M567.7 276.3L561.9 273.7M567.7 276.3L570.5 276.8L571 277.6L572 278.9M572 278.9L572.8 288.6L576 291.6L576.2 295.2L574.1 297.8L572.3 296L572.5 291.6L569 289.7M572.8 282.8L581.1 282.9L589.2 279.4M560.6 294.1L567.9 297.5L567.4 307.7L563.2 313.3M563.2 313.3L558.2 312.8M563.2 313.3L565.1 323.5M565.1 323.5L562.8 323.2L561.8 325.1L563.5 327.6L565.7 326L565.1 323.5M565.7 326L567.9 326.1M556.9 332.4L557.9 333.2L554.5 336.9L551.3 335L554.3 332.1L556.9 332.4M586 263.3L581.7 258.8L570.9 252.7M570.9 252.7L565.2 252.9L562 252.9L561 253.2M561 253.2L562.2 254.8L562 256.5L561.2 256.9M561.2 256.9L562 259.6L558 262.8M557 258.1L558.8 258.3L559.7 256.7L561.2 256.9M558.6 253.8L559.3 254.1L561 253.2M570.9 252.7L570.9 249.7L574.2 244.6L571.2 237.9M562.2 240L571.2 237.9M571.2 237.9L574.9 234.3L577.4 237.3L582.9 239.8L587 240.3L590.5 237.9L593.6 238.8M593.6 238.8L591.1 242.1L591.1 252.4L592.8 254.8M593.6 238.8L598.7 235.9L602.4 235.8L610.4 227.2L598.7 223.9L595.6 219.9L597.2 217.4M613.7 217.5L613.7 223.1L612.4 224.9L610.4 227.2M596.2 218.9L593.3 218.6L595 214.3M595 214.3L596.2 214.6L597 213.9M595 214.3L588.4 208.7L582.3 207.4L581.4 209.6L578.1 209M578.1 209L579.3 201.8L583.8 198.8M578.1 209L576.5 214.2L572 219.8L571.1 225.3M571.1 225.3L568.2 227.9L571.4 229.4L574.9 234.3M544.4 226.6L542.5 225.5L544.3 224.6L545.8 220.8L547.9 220.4L550.6 223.1L556.9 223.3L559.8 220.7L563.7 222.1L566.7 218.5L565.7 216L567.6 215.2L569 215.4L569 219.5L571.1 223.1M448.8 130.9L451 129.7L456.3 132.3L453.2 137.3L454.5 141.7L453.3 144.5M469.1 126.5L475.5 128.9L483 129.2M495.7 125.7L494 119.2M494 119.2L491.7 117.1L495.7 114.5M495.7 114.5L497.5 110.6L492.1 109.3M492.1 109.3L486.7 108L481.6 104.5M492.1 109.3L491.7 107.4L490.6 109.1M491.7 107.4L492 105.5M492 105.5L488.6 103.6L483.9 103.9M492 105.5L491.5 102.5L494 101.4L494.2 97.9M498.8 93.7L500.9 94L502.7 93.6M514.7 97.1L517.2 104.6M517.2 104.6L509.3 107L513.2 111M513.2 111L511.1 112.6L511.3 115L501.8 114.8M501.8 114.8L498.7 114L498.2 114.6L495.7 114.5M494 119.2L500 119L504.2 116.6M504.2 116.6L501.5 116L501.8 114.8M504.2 116.6L509.1 116L513.8 117.7M513.8 117.7L513.5 119.1L514.2 120.3M513.8 117.7L520.6 116.7M520.6 116.7L522.8 113.1M522.8 113.1L522.5 112.1L522.7 111.8M522.7 111.8L513.2 111M517.2 104.6L528.1 109.2M528.1 109.2L522.7 111.8M528.1 109.2L538.7 110.4M522.8 113.1L525.3 114.1L533.7 111.7L537.3 112.3M537.3 112.3L537.9 111.1L538.7 110.4M538.7 110.4L542.5 106.6L541.4 103.3M541.4 103.3L541.3 96.7M541.3 96.7L540.6 95.8L539.2 95.5M539.2 95.5L533.9 95.5L530.4 95.2M539.2 95.5L539.2 94L535 93M534.4 90.6L545.2 89.7L549.8 91.8M549.8 91.8L547.1 95.6L541.3 96.7M543.6 85.6L552.1 86.5M552.1 86.5L553.5 87.2L553.7 88.5L554.7 90.2M554.7 90.2L551.6 91.3L549.8 91.8M552.1 86.5L554.1 80.8M554.7 90.2L562.3 92L562 94.1L567.5 98.2L563.6 99L564.9 101.8M564.9 101.8L562.5 102L561.4 104L546.5 102.3L541.4 103.3M564.9 101.8L570.5 101.1L572.3 102.7L571.8 104.2L574.1 104.3L575.1 106.1L588.5 108.9L587.5 113.8L584.8 114L583.2 116M550.2 112.8L556.1 113.1L559.6 117.2L556.6 117.9L554.8 120.6M554.8 120.6L554.6 116.9L550.2 112.8M550.2 112.8L539.1 113.8M539.1 113.8L538.9 113L537.3 112.3M554.8 120.6L556.1 121.1L557.4 120.7L558.8 121.2M539.1 113.8L532 118.8M532 118.8L530.3 118.7L528.1 119.4M528.1 119.4L521.6 117.7M521.6 117.7L521.1 116.8L520.6 116.7M521.6 117.7L518.1 120.7L513.5 120.6M528.6 122.4L519.9 121.3L519.3 122.5L527 129.2M528.1 119.4L528.7 120.5L529.7 121.3L528.6 122.4M528.6 122.4L530.3 124.7L529.2 126.2M529.2 126.2L528.6 126.5L527.7 127.1L527.3 128.7M529.2 126.2L532.4 128L531.6 128.9M531.6 128.9L529.6 130.9M531.6 128.9L533.1 130.9L536.9 129.7L533.7 126.9L532.1 128.2M533.1 130.9L532.7 131.9L533.1 133.1L534.3 133.8M534.3 133.8L531.8 137.3M534.3 133.8L539.8 132.4M539.8 132.4L539.6 130.5L538.2 129.6M538.2 129.6L536.9 129.7M538.2 129.6L539.9 127.1L539 124.2M539 124.2L532 118.8M539 124.2L539.8 125.4L552 124.3L555.7 125.7M539.8 132.4L548.8 132.4L548.8 131M548.8 131L551.7 130.1L554.1 130.5M548.8 131L550.2 131.8L549.3 133.5L548.6 133.9M505.9 82.6L509.5 79L510.4 75.7L508.6 74.2L508.4 70.4L510.3 67.8L513.1 67.8L514.1 66.7L513.1 65.7L522.2 56.5L524.9 56.5L525.7 55L531 55.4L531.5 53.5L533.2 53.4M533.2 53.4L541.5 56.7L542.5 62.2M533.2 53.4L544.9 54.7L549 51.4L553.4 50.4L557 51.5L555.8 53.6M555.8 53.6L558.1 53.3L563 52.1M555.8 53.6L555.4 55.6L559.8 57.4L557.1 59.6L560.5 62.8L558.5 65.3L561.1 67.4L559.9 69.2L564.2 71.2L554.3 77.9M453 93.2L453 96.2L456.9 96.8M567.6 150L571.1 150.3M577.3 148.1L579 145.3L586.9 145.6L596.2 143.6M596.2 143.6L599.5 144L600.5 144.8L601.8 144.3M601.8 144.3L600 137.8L601.9 137M601.9 137L598.7 135.5L598.5 133.1M598.5 133.1L595.7 131.7L592.7 131.8M588.2 126.5L603.8 129.1L606.5 130.9M606.5 130.9L606.8 133.2L602.4 132.7M602.4 132.7L598.5 133.1M602.4 132.7L606.8 139.7M606.8 139.7L601.9 137M606.5 130.9L610.5 133L612.7 131.1M606.8 139.7L611.2 137.4L611.1 139.7L613.5 141M595 144.1L591.9 146.6L591.2 152.1L584.8 155.1M584.8 155.1L579.3 158.1L576.1 157M576.9 151.5L578.6 152.7L576.4 155.3M574.4 155.9L575.4 155.9L575.6 155.4L576.4 155.3M576.4 155.3L576.4 156.5L576 156.9L576.1 157M576.1 157L573.8 166.1M575.6 157.9L574.6 157.5L573.9 160.8L575.2 160.4M573.9 166.5L577.1 166.9L581.2 164.7L582.6 163.2L579.7 160.4L586 158.5M586 158.5L584.8 155.1M586 158.5L593.7 161.3L601.7 167L607 167.2M610.9 164.7L609 164.5L607 167.2M607 167.2L609.5 167.5L610.2 168.8L612.2 168.8M601.8 144.3L605.6 148.5L603.7 153.4L609.1 157.6L612.7 164.9M596.2 203.5L597.9 200L608.2 201.8L614.2 197L622.4 196M622.4 196L630.9 193.1L632.9 187.4L631.5 185.4M622.4 196L624.6 200.6L625.6 202.6M631.5 185.4L622.4 184.6L621.2 181M631.5 185.4L633.5 179.1L634.9 179.1M634.5 176.9L634 175.9M619 179.6L619.9 180.1L620.7 179.9M627.9 144.2L632.4 142L637.6 141.8L648.4 146.2L648.6 148.6M648.6 148.6L646.7 156.2L650.2 162.6L647.6 165.2M647.6 165.2L652.9 169.6L654.6 173.9L650.5 175.4L649.4 178.7M647.6 165.2L652.4 166.6L663.2 165L664.9 161L671.7 159.3L671.5 157.6L674.5 155.1L673.4 153.2L676.1 153.3L678.2 150L677.2 147.4L688.3 144.4M688.3 144.4L687.8 143.6M687.8 143.6L682.9 143.3L678.8 145.5L675.9 140.5L671.3 144.3L667.4 144.4M667.4 144.4L665.3 143.7L663.7 143.7M663.7 143.7L661.5 142.9L658.7 144.4L658.1 146.7L653.6 149.3L648.6 148.6M663.7 143.7L663.8 142L657 139.4L651.9 136.1L650.5 133.2L646.5 132.8L645.1 129.9L641.3 128.4L636.4 131L636.9 132.5L633.7 132.5M633.7 132.5L628.3 129.6L623.8 131.2M633.7 132.5L633.6 122L640.9 120.3L650.9 126.3L659.1 125.6L662.5 127.7L662.3 130.6L663.7 130.6L664.3 132.9L667.9 133L668.7 134.3L676.3 129.8M676.3 129.8L674.8 131.9L682.3 133.7L676.5 135.5M676.5 135.5L674.9 134.8L675.5 133.5L671.7 134.1L669.5 137.6L667.1 137.4L666.3 138.7L668.4 139.4L669 141.5L667.4 144.4M676.5 135.5L672.4 135.9L672.1 137.6L684.1 137.8M684.1 137.8L684.8 140.5L687.4 140.8L687.8 143.6M684.1 137.8L687.2 135.2L692.2 135L693.2 133.2L702.8 129.5M702.8 129.5L685.6 126.8L683.5 129.1L678.8 128.1L676.3 129.8M702.8 129.5L702.6 127.9L704.5 127.2L702 122.2L709.1 120.5L711.1 115.4L716.7 116.3L718.5 112.2L723 110M723 110L711.7 104.7L707.6 105.5L703.7 103.8L702.2 105.3L692.2 95.9L693.2 95L683.4 97.9L683.6 96.3L677 96L676.1 93.1L671 92.4L649.3 96.4L648 97.4L650 99.3L645.1 102.2L649.7 104.2L649 105.5L636 104.8L633 106L623.3 102.9L618.9 103L613 106L612.7 108.1L609.8 106.5L606.7 112.4L611.2 114.2L612.7 117.6M723 110L736.8 105.5L751.2 108.5L753.9 106.6L752.8 104.9L755.7 101.9L764.8 104.2L765.4 106.3L769.4 107.5L778.5 107L783.1 109.8L789.3 110.3L799.8 107.1L806.4 108.1M724.1 109.8L724.8 111.8L733.3 116.6L732.2 120L733.2 121.2L745.6 124.2L748.6 128.5L761.4 128.7L773.1 131.7L788.6 128.1L792.6 125.6L791.2 123.5L792.7 121.7L797.2 122.5L808.5 117.2L814.9 117.2L810.3 113.3L803.7 114.2L803 113.1L806.4 108.1M806.4 108.1L809.8 109.2L813.8 107.4L817.9 102.2L816.3 100L818.7 98.5L826 97.9L832.8 99.8L837.6 108.5L842.6 109.4L845.9 111.4L847.1 114.1L858.6 112.1L853.1 121.6L847.2 122.1L847.5 127.9L846.1 129.4M846.1 129.4L838.7 130.6L839.2 132L835.4 131L828 136.4M846.1 129.4L846.5 129.9M833.6 142.4L839.6 140.2M781.8 188.7L774.1 183.6L765.1 186.1M765.1 186.1L763.6 186.5L764.1 189.8L762.6 189.7L762.2 187.8M762.2 187.8L760.1 188.7L756.8 187.1L757.6 184.7L755.8 184.2L755.1 181.6L752.1 182L752.5 178.7L755.2 176.3L755.2 171.7L753 169.4L751.3 169.6M751.3 169.6L750.8 173L745.1 174.4L742.2 182.2L740 181.5L739.5 186.6L738.1 187.3M738.1 187.3L738 189.4L737 188.9L737.2 191.2M727.7 187.3L726.8 181.1L725 180.3L727.5 178.2L725.4 176.7L726.4 174.8L730 176.1L730.3 178.1L737.3 178.9L733.8 183.2L735.4 184.6L736.6 182.8L738.1 187.3M751.3 169.6L748.3 169.2L749.2 168L747.9 166.2L743.5 166.7L735.3 171M735.3 171L736.3 173.7L727.2 172.9L730.6 169.5L735.3 171M727.1 172.3L726.9 170.1L725.2 170.7M725.2 170.7L718.6 169.8L708.7 164.3L705.2 164.2M705.2 164.2L702.3 168.1L711.4 172.2L725 174.9L725.2 170.7M705.2 164.2L698.5 160.3L697.7 157.2L699.7 157.6L699 152.4L695.9 149.1M668.4 182.6L670.3 180.7L676.6 180.7L672.2 173.4L675.4 170.4L678.7 170.6L688.6 158.2L686.3 156.8L684.3 152.4L685.7 151.2L693.2 151.4L695.9 149.1M695.9 149.1L691.2 147.9L690.4 145.7L688.3 144.4M762.3 189L759.9 190.9L759.3 191.9M759.3 191.9L754 193.9L751.5 197.5L755.8 204L753.8 207L757.8 216.2L754.8 221.8M759.3 191.9L760.7 194.5L762.6 194.6L762 200.2L768 197.9L772.4 200.4L772.5 203.2L774.8 205.7L773.8 209.4M773.8 209.4L767.4 209.5L765.6 211.9L766.3 215.3M773.8 209.4L776.1 210.5L777.4 208.6L779.9 209.6M779.9 209.6L779.7 204.7L773.4 196.9L770 195.2L772.7 193.4L771.6 190.9L768 190.9L765.1 186.1M779.9 209.6L780.2 214.9L775.5 217.1L776.7 218.8L771.3 220.2M759.2 231.6L762 232.4L762.2 233.8L765 232.3M786.4 244.3L788.8 247.8L795.5 245.7L798.2 246.5L800.5 245.9L804.1 237.7L809.8 238.2M799.3 237.1L800.6 238.6L802.6 237.7L802.9 234.5M875.6 257.4L875.6 266.7L875.7 275.9"/>
<g class="pt"><circle cx="149.3" cy="104.3" r="2.55"/><circle cx="150.1" cy="105.8" r="2.55"/><circle cx="160.1" cy="116.5" r="2.55"/><circle cx="125.6" cy="120.1" r="2.55"/><circle cx="126.5" cy="123" r="2.55"/><circle cx="148.3" cy="123.9" r="2.55"/><circle cx="143.4" cy="126.3" r="2.55"/><circle cx="156.4" cy="134.3" r="2.55"/><circle cx="154.8" cy="136.3" r="2.55"/><circle cx="153.1" cy="138.3" r="2.55"/><circle cx="175.2" cy="136.6" r="2.55"/><circle cx="175.2" cy="138.8" r="2.55"/><circle cx="125.6" cy="141.8" r="2.55"/><circle cx="128.1" cy="140.1" r="2.55"/><circle cx="126.5" cy="143.7" r="2.55"/><circle cx="127.3" cy="145.9" r="2.55"/><circle cx="133.6" cy="146.6" r="2.55"/><circle cx="135.6" cy="149.2" r="2.55"/><circle cx="137.3" cy="151.6" r="2.55"/><circle cx="141.4" cy="146.2" r="2.55"/><circle cx="139" cy="153.7" r="2.55"/><circle cx="141.4" cy="154.9" r="2.55"/><circle cx="140.6" cy="157.1" r="2.55"/><circle cx="143.1" cy="153.2" r="2.55"/><circle cx="155.1" cy="154.9" r="2.55"/><circle cx="158.4" cy="158.2" r="2.55"/><circle cx="156.1" cy="162.1" r="2.55"/><circle cx="163.6" cy="150.7" r="2.55"/><circle cx="171.7" cy="150.7" r="2.55"/><circle cx="187.7" cy="151.2" r="2.55"/><circle cx="191.7" cy="144.1" r="2.55"/><circle cx="194.2" cy="132.6" r="2.55"/><circle cx="198.9" cy="133.8" r="2.55"/><circle cx="201" cy="132.4" r="2.55"/><circle cx="208.8" cy="121.6" r="2.55"/><circle cx="214.2" cy="122.3" r="2.55"/><circle cx="219.1" cy="123.9" r="2.55"/><circle cx="208.5" cy="130.4" r="2.55"/><circle cx="213.3" cy="130.4" r="2.55"/><circle cx="204.3" cy="138.8" r="2.55"/><circle cx="198.5" cy="140.4" r="2.55"/><circle cx="197.7" cy="142.4" r="2.55"/><circle cx="198.4" cy="148.7" r="2.55"/><circle cx="211.3" cy="140.4" r="2.55"/><circle cx="217.5" cy="139.9" r="2.55"/><circle cx="211.2" cy="150.4" r="2.55"/><circle cx="228.5" cy="136.6" r="2.55"/><circle cx="233.8" cy="138.3" r="2.55"/><circle cx="227.1" cy="147.9" r="2.55"/><circle cx="233.3" cy="126.6" r="2.55"/><circle cx="237.5" cy="128.4" r="2.55"/><circle cx="241.6" cy="132.4" r="2.55"/><circle cx="238.8" cy="134.6" r="2.55"/><circle cx="246.3" cy="137.1" r="2.55"/><circle cx="243.8" cy="140.8" r="2.55"/><circle cx="239.3" cy="145.9" r="2.55"/><circle cx="246.8" cy="148.4" r="2.55"/><circle cx="247.9" cy="125.4" r="2.55"/><circle cx="250.8" cy="141.3" r="2.55"/><circle cx="252.4" cy="138.3" r="2.55"/><circle cx="254.6" cy="137.6" r="2.55"/><circle cx="257.1" cy="135.4" r="2.55"/><circle cx="258.8" cy="136.6" r="2.55"/><circle cx="260.4" cy="134.6" r="2.55"/><circle cx="262.1" cy="132.9" r="2.55"/><circle cx="264.6" cy="131.6" r="2.55"/><circle cx="266.2" cy="130.4" r="2.55"/><circle cx="257.9" cy="127.1" r="2.55"/><circle cx="259.6" cy="128.8" r="2.55"/><circle cx="261.2" cy="129.9" r="2.55"/><circle cx="262.9" cy="128.3" r="2.55"/><circle cx="265.4" cy="126.3" r="2.55"/><circle cx="267.1" cy="124.6" r="2.55"/><circle cx="264.6" cy="120.5" r="2.55"/><circle cx="269.1" cy="114.6" r="2.55"/><circle cx="273.4" cy="117.1" r="2.55"/><circle cx="272.9" cy="127.1" r="2.55"/><circle cx="277.1" cy="123.3" r="2.55"/><circle cx="281.2" cy="123" r="2.55"/><circle cx="271.7" cy="129.3" r="2.55"/><circle cx="233.8" cy="153.7" r="2.55"/><circle cx="236.3" cy="155.9" r="2.55"/><circle cx="232.5" cy="157.6" r="2.55"/><circle cx="243.4" cy="152.9" r="2.55"/><circle cx="245.4" cy="154.9" r="2.55"/><circle cx="246.8" cy="157.1" r="2.55"/><circle cx="241.6" cy="163.4" r="2.55"/><circle cx="239.6" cy="169.9" r="2.55"/><circle cx="241.6" cy="170.9" r="2.55"/><circle cx="241.3" cy="174.5" r="2.55"/><circle cx="245.8" cy="174.5" r="2.55"/><circle cx="253.4" cy="178.7" r="2.55"/><circle cx="257.6" cy="180.7" r="2.55"/><circle cx="260.4" cy="183.8" r="2.55"/><circle cx="246.3" cy="188.7" r="2.55"/><circle cx="253.4" cy="198.2" r="2.55"/><circle cx="254.6" cy="198.7" r="2.55"/><circle cx="272.9" cy="194.8" r="2.55"/><circle cx="274.9" cy="192.8" r="2.55"/><circle cx="272.6" cy="196.5" r="2.55"/><circle cx="279.2" cy="197.3" r="2.55"/><circle cx="285.4" cy="197.8" r="2.55"/><circle cx="194.7" cy="156.2" r="2.55"/><circle cx="198" cy="155.9" r="2.55"/><circle cx="202.7" cy="157.6" r="2.55"/><circle cx="192.2" cy="160.1" r="2.55"/><circle cx="195.5" cy="160.4" r="2.55"/><circle cx="196.4" cy="162.6" r="2.55"/><circle cx="194.2" cy="165.4" r="2.55"/><circle cx="193" cy="166.5" r="2.55"/><circle cx="202.5" cy="165" r="2.55"/><circle cx="208.8" cy="161.2" r="2.55"/><circle cx="212.2" cy="160.9" r="2.55"/><circle cx="212.5" cy="164.5" r="2.55"/><circle cx="217.5" cy="164.9" r="2.55"/><circle cx="188.5" cy="176.7" r="2.55"/><circle cx="183.4" cy="184.2" r="2.55"/><circle cx="192.2" cy="189.2" r="2.55"/><circle cx="191.7" cy="194.5" r="2.55"/><circle cx="195.5" cy="194.8" r="2.55"/><circle cx="206.8" cy="198.7" r="2.55"/><circle cx="215" cy="200.7" r="2.55"/><circle cx="222.6" cy="201.5" r="2.55"/><circle cx="227.6" cy="207" r="2.55"/><circle cx="41" cy="75" r="2.55"/><circle cx="203.8" cy="79.2" r="2.55"/><circle cx="24.6" cy="189.1" r="2.55"/><circle cx="26" cy="190" r="2.55"/><circle cx="19.2" cy="310.4" r="2.55"/><circle cx="758" cy="78.7" r="2.55"/><circle cx="246.7" cy="223.5" r="2.55"/><circle cx="275" cy="214.3" r="2.55"/><circle cx="280.5" cy="220.8" r="2.55"/><circle cx="304.6" cy="212.5" r="2.55"/><circle cx="308.5" cy="230.5" r="2.55"/><circle cx="269.2" cy="238.4" r="2.55"/><circle cx="257.7" cy="278.4" r="2.55"/><circle cx="254.7" cy="284.2" r="2.55"/><circle cx="317.5" cy="278.2" r="2.55"/><circle cx="288.8" cy="298.2" r="2.55"/><circle cx="331.3" cy="295" r="2.55"/><circle cx="337.6" cy="294.5" r="2.55"/><circle cx="278" cy="313.1" r="2.55"/><circle cx="341.2" cy="317" r="2.55"/><circle cx="282.2" cy="330.1" r="2.55"/><circle cx="271.9" cy="335.1" r="2.55"/><circle cx="291.8" cy="346.6" r="2.55"/><circle cx="307.1" cy="348.3" r="2.55"/><circle cx="502.4" cy="73.4" r="2.55"/><circle cx="522.5" cy="74" r="2.55"/><circle cx="525.2" cy="80.9" r="2.55"/><circle cx="526.5" cy="86.1" r="2.55"/><circle cx="525" cy="90.8" r="2.55"/><circle cx="543.8" cy="84" r="2.55"/><circle cx="542.1" cy="88" r="2.55"/><circle cx="545.2" cy="88" r="2.55"/><circle cx="465" cy="90.2" r="2.55"/><circle cx="456.9" cy="94.6" r="2.55"/><circle cx="450.9" cy="97.8" r="2.55"/><circle cx="451.8" cy="99.5" r="2.55"/><circle cx="468" cy="95.5" r="2.55"/><circle cx="469" cy="98.6" r="2.55"/><circle cx="469" cy="100.5" r="2.55"/><circle cx="462.1" cy="102.6" r="2.55"/><circle cx="474" cy="101.1" r="2.55"/><circle cx="473.6" cy="103.9" r="2.55"/><circle cx="480.6" cy="104.5" r="2.55"/><circle cx="486.2" cy="105.2" r="2.55"/><circle cx="490.2" cy="100.5" r="2.55"/><circle cx="502.4" cy="90.8" r="2.55"/><circle cx="502.4" cy="97.4" r="2.55"/><circle cx="509.6" cy="91.4" r="2.55"/><circle cx="511.9" cy="94.2" r="2.55"/><circle cx="512.1" cy="100.5" r="2.55"/><circle cx="499.4" cy="104.9" r="2.55"/><circle cx="467.8" cy="109.9" r="2.55"/><circle cx="473.1" cy="109.9" r="2.55"/><circle cx="480.5" cy="110.9" r="2.55"/><circle cx="480" cy="110" r="2.55"/><circle cx="530.2" cy="102" r="2.55"/><circle cx="533.8" cy="101.1" r="2.55"/><circle cx="515.2" cy="107" r="2.55"/><circle cx="518" cy="108.6" r="2.55"/><circle cx="565" cy="110.2" r="2.55"/><circle cx="496.2" cy="113.2" r="2.55"/><circle cx="493.4" cy="117.4" r="2.55"/><circle cx="492.5" cy="120.8" r="2.55"/><circle cx="508" cy="115.1" r="2.55"/><circle cx="511.8" cy="115.5" r="2.55"/><circle cx="530.6" cy="116.1" r="2.55"/><circle cx="479.4" cy="119" r="2.55"/><circle cx="532.4" cy="122.6" r="2.55"/><circle cx="510.2" cy="127.8" r="2.55"/><circle cx="509.4" cy="130.5" r="2.55"/><circle cx="528.8" cy="129" r="2.55"/><circle cx="534.9" cy="130.2" r="2.55"/><circle cx="480.2" cy="132" r="2.55"/><circle cx="463" cy="134.9" r="2.55"/><circle cx="462.1" cy="136.1" r="2.55"/><circle cx="447.8" cy="139.9" r="2.55"/><circle cx="473.6" cy="140.2" r="2.55"/><circle cx="454.6" cy="153.2" r="2.55"/><circle cx="515.2" cy="148" r="2.55"/><circle cx="482.5" cy="170.2" r="2.55"/><circle cx="522.4" cy="178.6" r="2.55"/><circle cx="580.9" cy="91.4" r="2.55"/><circle cx="573.6" cy="139" r="2.55"/><circle cx="567.8" cy="150.5" r="2.55"/><circle cx="579.6" cy="146.5" r="2.55"/><circle cx="584.6" cy="147.6" r="2.55"/><circle cx="582.1" cy="150.5" r="2.55"/><circle cx="573.4" cy="159.2" r="2.55"/><circle cx="575.9" cy="161.1" r="2.55"/><circle cx="574.6" cy="158" r="2.55"/><circle cx="598.1" cy="151.4" r="2.55"/><circle cx="620.5" cy="148" r="2.55"/><circle cx="624.6" cy="158.6" r="2.55"/><circle cx="616.5" cy="162.6" r="2.55"/><circle cx="625.9" cy="171.8" r="2.55"/><circle cx="601.9" cy="178.9" r="2.55"/><circle cx="606.9" cy="179.6" r="2.55"/><circle cx="619.6" cy="177.4" r="2.55"/><circle cx="620.5" cy="178" r="2.55"/><circle cx="631.2" cy="178.2" r="2.55"/><circle cx="585.5" cy="188.6" r="2.55"/><circle cx="661.2" cy="144.9" r="2.55"/><circle cx="658.8" cy="155.9" r="2.55"/><circle cx="675.9" cy="139" r="2.55"/><circle cx="687.4" cy="133.2" r="2.55"/><circle cx="679" cy="150.8" r="2.55"/><circle cx="681.9" cy="154.2" r="2.55"/><circle cx="673" cy="164.5" r="2.55"/><circle cx="693.6" cy="159" r="2.55"/><circle cx="699.6" cy="172.8" r="2.55"/><circle cx="703.8" cy="172.1" r="2.55"/><circle cx="694" cy="183.6" r="2.55"/><circle cx="697.4" cy="182.8" r="2.55"/><circle cx="693" cy="193" r="2.55"/><circle cx="681.1" cy="195.9" r="2.55"/><circle cx="702.1" cy="212.8" r="2.55"/><circle cx="717.1" cy="178.2" r="2.55"/><circle cx="742.1" cy="175.9" r="2.55"/><circle cx="752.5" cy="187.1" r="2.55"/><circle cx="772.5" cy="150.5" r="2.55"/><circle cx="783.6" cy="151.8" r="2.55"/><circle cx="786.5" cy="174.2" r="2.55"/><circle cx="804.9" cy="136.4" r="2.55"/><circle cx="814.6" cy="136.1" r="2.55"/><circle cx="831.5" cy="138.6" r="2.55"/><circle cx="835.2" cy="136.1" r="2.55"/><circle cx="835" cy="143.2" r="2.55"/><circle cx="832.1" cy="139.9" r="2.55"/><circle cx="819.6" cy="160.9" r="2.55"/><circle cx="817.1" cy="162.4" r="2.55"/><circle cx="815.9" cy="163.6" r="2.55"/><circle cx="815.2" cy="167.8" r="2.55"/><circle cx="809" cy="174.2" r="2.55"/><circle cx="796.5" cy="185.9" r="2.55"/><circle cx="799" cy="186.5" r="2.55"/><circle cx="789.6" cy="193.9" r="2.55"/><circle cx="775.5" cy="204.2" r="2.55"/><circle cx="759.9" cy="210.8" r="2.55"/><circle cx="772.5" cy="213" r="2.55"/><circle cx="772.1" cy="216.5" r="2.55"/><circle cx="780.2" cy="215.5" r="2.55"/><circle cx="816.2" cy="204.5" r="2.55"/><circle cx="817.8" cy="208" r="2.55"/><circle cx="820.9" cy="213" r="2.55"/><circle cx="700.9" cy="230.2" r="2.55"/><circle cx="702.8" cy="232.4" r="2.55"/><circle cx="704.6" cy="229.9" r="2.55"/><circle cx="702.8" cy="230.5" r="2.55"/><circle cx="760" cy="229.2" r="2.55"/><circle cx="768.6" cy="245.5" r="2.55"/><circle cx="769.6" cy="246.4" r="2.55"/><circle cx="780.9" cy="258" r="2.55"/><circle cx="777.1" cy="267" r="2.55"/><circle cx="778.8" cy="267.8" r="2.55"/><circle cx="790" cy="270.5" r="2.55"/><circle cx="792.8" cy="270.5" r="2.55"/><circle cx="794.6" cy="270.2" r="2.55"/><circle cx="774.4" cy="279.6" r="2.55"/><circle cx="804" cy="232.8" r="2.55"/><circle cx="793" cy="242.4" r="2.55"/><circle cx="794.4" cy="243.2" r="2.55"/><circle cx="805.2" cy="256.1" r="2.55"/><circle cx="815.2" cy="264" r="2.55"/><circle cx="824.9" cy="222.8" r="2.55"/><circle cx="866.5" cy="147.4" r="2.55"/><circle cx="871.2" cy="149.2" r="2.55"/><circle cx="423.8" cy="207.8" r="2.55"/><circle cx="426.8" cy="211.5" r="2.55"/><circle cx="451.1" cy="213.9" r="2.55"/><circle cx="469.4" cy="208.9" r="2.55"/><circle cx="434.9" cy="222.8" r="2.55"/><circle cx="441.8" cy="229.2" r="2.55"/><circle cx="446.9" cy="231.4" r="2.55"/><circle cx="468.1" cy="227.1" r="2.55"/><circle cx="483.4" cy="231.4" r="2.55"/><circle cx="496.5" cy="221.4" r="2.55"/><circle cx="497.8" cy="235.5" r="2.55"/><circle cx="508" cy="232.8" r="2.55"/><circle cx="533.6" cy="230.1" r="2.55"/><circle cx="516.5" cy="252.6" r="2.55"/><circle cx="584" cy="224" r="2.55"/><circle cx="582.8" cy="225.8" r="2.55"/><circle cx="581.8" cy="227.4" r="2.55"/><circle cx="564.9" cy="247.1" r="2.55"/><circle cx="570.9" cy="248.4" r="2.55"/><circle cx="581.9" cy="247" r="2.55"/><circle cx="576.5" cy="250.8" r="2.55"/><circle cx="578.4" cy="253" r="2.55"/><circle cx="581.8" cy="253.9" r="2.55"/><circle cx="582.1" cy="256.5" r="2.55"/><circle cx="588" cy="254.6" r="2.55"/><circle cx="585.9" cy="261.4" r="2.55"/><circle cx="586.8" cy="262.2" r="2.55"/><circle cx="603" cy="244" r="2.55"/><circle cx="559.6" cy="255.2" r="2.55"/><circle cx="557.1" cy="259.2" r="2.55"/><circle cx="559.6" cy="263" r="2.55"/><circle cx="573.4" cy="267" r="2.55"/><circle cx="631.8" cy="263.2" r="2.55"/><circle cx="681.8" cy="240.8" r="2.55"/><circle cx="531.9" cy="277.4" r="2.55"/><circle cx="526.5" cy="285.2" r="2.55"/><circle cx="562.5" cy="278.8" r="2.55"/><circle cx="564" cy="278" r="2.55"/><circle cx="570.5" cy="288.2" r="2.55"/><circle cx="574.9" cy="292.1" r="2.55"/><circle cx="554.4" cy="293" r="2.55"/><circle cx="559.4" cy="292.4" r="2.55"/><circle cx="555.9" cy="296.5" r="2.55"/><circle cx="551.5" cy="297.4" r="2.55"/><circle cx="547.5" cy="300.8" r="2.55"/><circle cx="562.1" cy="300.8" r="2.55"/><circle cx="559.2" cy="306.5" r="2.55"/><circle cx="561.9" cy="307" r="2.55"/><circle cx="518.4" cy="300.2" r="2.55"/><circle cx="530.2" cy="300.8" r="2.55"/><circle cx="537.8" cy="308.2" r="2.55"/><circle cx="542.1" cy="312.6" r="2.55"/><circle cx="546.1" cy="310.2" r="2.55"/><circle cx="515" cy="315.1" r="2.55"/><circle cx="522.5" cy="313.9" r="2.55"/><circle cx="553.8" cy="322.6" r="2.55"/><circle cx="554" cy="324.2" r="2.55"/><circle cx="542.1" cy="332.4" r="2.55"/><circle cx="552.1" cy="333.2" r="2.55"/><circle cx="554" cy="335.1" r="2.55"/><circle cx="558.4" cy="330.5" r="2.55"/><circle cx="560.9" cy="331.5" r="2.55"/><circle cx="562.8" cy="331.8" r="2.55"/><circle cx="559" cy="333.6" r="2.55"/><circle cx="562.1" cy="334.9" r="2.55"/><circle cx="556.5" cy="333" r="2.55"/><circle cx="557.8" cy="338" r="2.55"/><circle cx="556.1" cy="340.9" r="2.55"/><circle cx="526.2" cy="346.4" r="2.55"/><circle cx="546.6" cy="346.5" r="2.55"/><circle cx="607.5" cy="306.8" r="2.55"/><circle cx="815.5" cy="264" r="2.55"/><circle cx="883.1" cy="276" r="2.55"/><circle cx="810.1" cy="310.2" r="2.55"/><circle cx="854.9" cy="306.7" r="2.55"/><circle cx="852" cy="326.7" r="2.55"/><circle cx="803.3" cy="340.7" r="2.55"/><circle cx="896.1" cy="307.3" r="2.55"/><circle cx="901.9" cy="316.4" r="2.55"/><circle cx="905.4" cy="322.2" r="2.55"/><circle cx="909.1" cy="321.3" r="2.55"/><circle cx="909.3" cy="327.7" r="2.55"/><circle cx="903.9" cy="345.9" r="2.55"/><circle cx="898.4" cy="350.4" r="2.55"/><circle cx="868.9" cy="349.4" r="2.55"/><circle cx="867" cy="348.4" r="2.55"/><circle cx="880.2" cy="355.8" r="2.55"/><circle cx="882.9" cy="357.2" r="2.55"/><circle cx="886.4" cy="357.6" r="2.55"/><circle cx="893.8" cy="371.7" r="2.55"/></g>
</svg><div id="zoomc"><div style="top:1px">+</div><hr><div style="top:27px;font-size:20px">-</div></div><div id="attr">Leaflet</div></div>
<div id="vbar"><div id="vthumb"></div></div>
</body>
</html>
